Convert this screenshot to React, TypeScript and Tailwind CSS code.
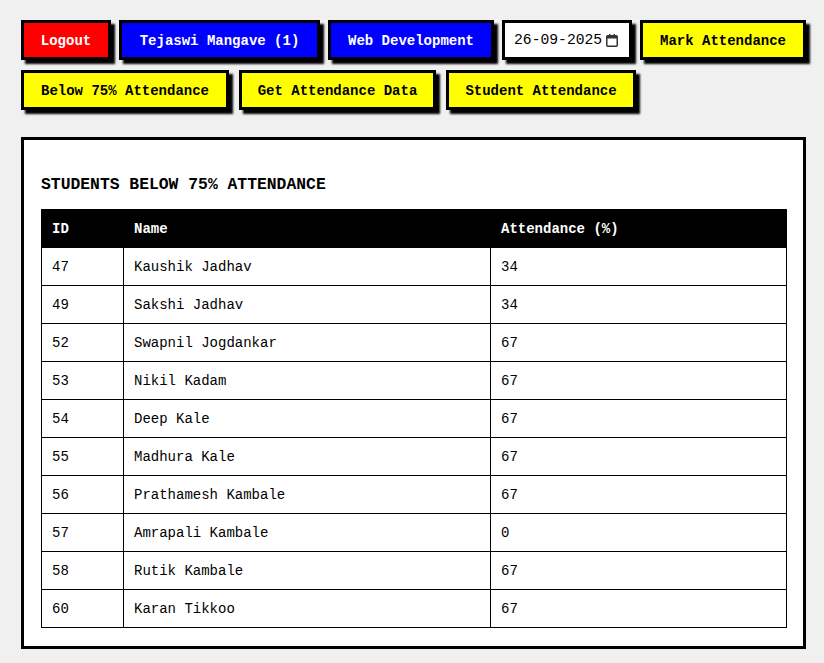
import React from "react";

const rows: [string, string, string][] = [
  ["47", "Kaushik Jadhav", "34"],
  ["49", "Sakshi Jadhav", "34"],
  ["52", "Swapnil Jogdankar", "67"],
  ["53", "Nikil Kadam", "67"],
  ["54", "Deep Kale", "67"],
  ["55", "Madhura Kale", "67"],
  ["56", "Prathamesh Kambale", "67"],
  ["57", "Amrapali Kambale", "0"],
  ["58", "Rutik Kambale", "67"],
  ["60", "Karan Tikkoo", "67"],
];

const btn =
  "h-[40px] flex items-center justify-center border-[3px] border-black shadow-[4px_4px_2px_#000] text-[14px] font-bold leading-[16px] whitespace-nowrap pt-[2px]";

export default function App() {
  return (
    <div className="min-h-screen bg-[#f0f0f0] pt-[20px] pl-[21px] font-['Liberation_Mono','Courier_New',monospace] text-black">
      <div className="flex gap-2">
        <button className={`${btn} w-[90px] bg-[#ff0000] text-white`}>Logout</button>
        <button className={`${btn} w-[201px] bg-[#0000ff] text-white`}>Tejaswi Mangave (1)</button>
        <button className={`${btn} w-[166px] bg-[#0000ff] text-white`}>Web Development</button>
        <div className="h-[40px] w-[130px] flex items-center border-[3px] border-black bg-white shadow-[4px_4px_2px_#000] pl-[9px] pt-[1px] text-[14.7px] leading-[17px]">
          <span>26-09-2025</span>
          <svg width="12" height="13" viewBox="0 0 12 13" className="ml-[4px]">
            <rect x="0.75" y="1.75" width="10.5" height="10.5" rx="1" fill="none" stroke="#333" strokeWidth="1.5" />
            <rect x="1" y="2" width="10" height="2.5" fill="#333" />
            <rect x="3" y="0" width="1.5" height="2.5" fill="#333" />
            <rect x="7.5" y="0" width="1.5" height="2.5" fill="#333" />
          </svg>
        </div>
        <button className={`${btn} w-[166px] bg-[#ffff00] text-black`}>Mark Attendance</button>
      </div>
      <div className="flex gap-[10px] mt-[10px]">
        <button className={`${btn} w-[208px] bg-[#ffff00] text-black`}>Below 75% Attendance</button>
        <button className={`${btn} w-[197px] bg-[#ffff00] text-black`}>Get Attendance Data</button>
        <button className={`${btn} w-[190px] bg-[#ffff00] text-black`}>Student Attendance</button>
      </div>
      <div className="mt-[27px] w-[785px] border-[3px] border-black bg-white px-[17px] pb-[18px]">
        <h3 className="mt-[35px] mb-[15px] text-[16.38px] leading-[19px] font-bold uppercase">
          Students Below 75% Attendance
        </h3>
        <table className="w-[745px] table-fixed border-collapse border border-black text-[14px]">
          <colgroup>
            <col className="w-[82px]" />
            <col className="w-[367px]" />
            <col className="w-[296px]" />
          </colgroup>
          <thead>
            <tr className="bg-black text-white">
              <th className="border border-black px-[10px] pt-[11px] pb-[9px] leading-[17px] text-left font-bold">ID</th>
              <th className="border border-black px-[10px] pt-[11px] pb-[9px] leading-[17px] text-left font-bold">Name</th>
              <th className="border border-black px-[10px] pt-[11px] pb-[9px] leading-[17px] text-left font-bold">Attendance (%)</th>
            </tr>
          </thead>
          <tbody>
            {rows.map((r) => (
              <tr key={r[0]}>
                {r.map((c, i) => (
                  <td key={i} className="border border-black px-[10px] pt-[11px] pb-[9px] leading-[17px]">
                    {c}
                  </td>
                ))}
              </tr>
            ))}
          </tbody>
        </table>
      </div>
    </div>
  );
}
